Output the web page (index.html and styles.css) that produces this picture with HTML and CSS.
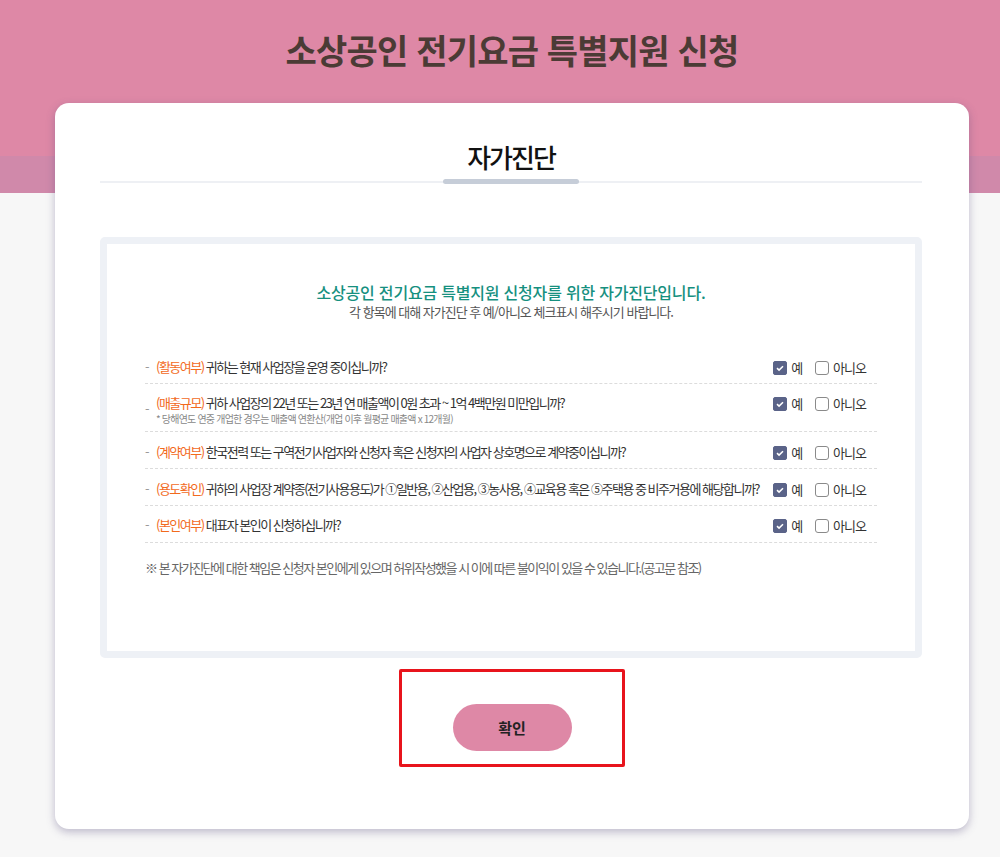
FILE: index.html
```html
<!DOCTYPE html>
<html lang="ko">
<head>
    <meta charset="UTF-8">
    <meta name="viewport" content="width=device-width, initial-scale=1.0">
    <title>소상공인 전기요금 특별지원 신청</title>
    <link rel="stylesheet" href="styles.css">
</head>
<body>
    <div class="wrap">
        <div class="top">
            <h1 class="main-title">소상공인 전기요금 특별지원 신청</h1>
        </div>

        <div class="card">
            <h2 class="card-title">자가진단</h2>
            <div class="tab-line"><span class="tab-bar"></span></div>

            <div class="check-box">
                <p class="intro">소상공인 전기요금 특별지원 신청자를 위한 자가진단입니다.</p>
                <p class="intro-sub">각 항목에 대해 자가진단 후 예/아니오 체크표시 해주시기 바랍니다.</p>

                <ul class="q-list">
                    <li class="q-row">
                        <div class="q-text"><span class="dash">-</span><span class="tag">(활동여부)</span> 귀하는 현재 사업장을 운영 중이십니까?</div>
                        <div class="answers">
                            <span class="opt"><span class="box on"><svg viewBox="0 0 14 14"><path d="M3.5 7.2l2.4 2.3 4.6-4.6" /></svg></span>예</span>
                            <span class="opt"><span class="box"></span>아니오</span>
                        </div>
                    </li>
                    <li class="q-row">
                        <div class="q-text"><span class="dash low">-</span><span class="tag">(매출규모)</span> 귀하 사업장의 22년 또는 23년 연 매출액이 0원 초과 ~ 1억 4백만원 미만입니까?
                            <div class="q-note">* 당해연도 연중 개업한 경우는 매출액 연환산(개업 이후 월평균 매출액 x 12개월)</div>
                        </div>
                        <div class="answers">
                            <span class="opt"><span class="box on"><svg viewBox="0 0 14 14"><path d="M3.5 7.2l2.4 2.3 4.6-4.6" /></svg></span>예</span>
                            <span class="opt"><span class="box"></span>아니오</span>
                        </div>
                    </li>
                    <li class="q-row">
                        <div class="q-text"><span class="dash">-</span><span class="tag">(계약여부)</span> 한국전력 또는 구역전기사업자와 신청자 혹은 신청자의 사업자 상호명으로 계약중이십니까?</div>
                        <div class="answers">
                            <span class="opt"><span class="box on"><svg viewBox="0 0 14 14"><path d="M3.5 7.2l2.4 2.3 4.6-4.6" /></svg></span>예</span>
                            <span class="opt"><span class="box"></span>아니오</span>
                        </div>
                    </li>
                    <li class="q-row">
                        <div class="q-text"><span class="dash">-</span><span class="tag">(용도확인)</span> 귀하의 사업장 계약종(전기사용용도)가 <span class="num">①</span>일반용, <span class="num">②</span>산업용, <span class="num">③</span>농사용, <span class="num">④</span>교육용 혹은 <span class="num">⑤</span>주택용 중 비주거용에 해당합니까?</div>
                        <div class="answers">
                            <span class="opt"><span class="box on"><svg viewBox="0 0 14 14"><path d="M3.5 7.2l2.4 2.3 4.6-4.6" /></svg></span>예</span>
                            <span class="opt"><span class="box"></span>아니오</span>
                        </div>
                    </li>
                    <li class="q-row">
                        <div class="q-text"><span class="dash">-</span><span class="tag">(본인여부)</span> 대표자 본인이 신청하십니까?</div>
                        <div class="answers">
                            <span class="opt"><span class="box on"><svg viewBox="0 0 14 14"><path d="M3.5 7.2l2.4 2.3 4.6-4.6" /></svg></span>예</span>
                            <span class="opt"><span class="box"></span>아니오</span>
                        </div>
                    </li>
                </ul>

                <p class="notice">※ 본 자가진단에 대한 책임은 신청자 본인에게 있으며 허위작성했을 시 이에 따른 불이익이 있을 수 있습니다.(공고문 참조)</p>
            </div>

            <div class="btn-area">
                <div class="btn-frame">
                    <button type="button" class="btn-ok">확인</button>
                </div>
            </div>
        </div>
    </div>
</body>
</html>
```

FILE: styles.css
```css
html, body {
    margin: 0;
    padding: 0;
}
body {
    font-family: "Noto Sans CJK KR", "Noto Sans", sans-serif;
    background: #f7f7f7;
    color: #333;
    overflow-x: hidden;
    min-height: 857px;
}
.wrap {
    width: 1024px;
    padding-bottom: 28px;
}
.top {
    height: 193px;
    background: linear-gradient(to bottom, #de88a6 0, #de88a6 156px, #d089aa 156px, #d089aa 193px);
}
.main-title {
    margin: 0;
    padding-top: 28px;
    font-size: 34px;
    line-height: 44px;
    font-weight: 700;
    letter-spacing: -0.8px;
    text-align: center;
    color: #4b3b35;
}
.card {
    width: 914px;
    box-sizing: border-box;
    margin: -90px auto 0 auto;
    padding: 36px 47px 62px 45px;
    background: #fff;
    border-radius: 14px;
    box-shadow: 0px 3px 8px rgba(80, 70, 120, 0.35);
}
.card-title {
    margin: 0;
    font-size: 26px;
    line-height: 36px;
    font-weight: 500;
    letter-spacing: -2px;
    text-align: center;
    color: #111;
}
.tab-line {
    margin-top: 4px;
    height: 5px;
    display: flex;
    justify-content: center;
    background: linear-gradient(#eef0f4, #eef0f4) center / 100% 2px no-repeat;
}
.tab-bar {
    width: 136px;
    height: 5px;
    border-radius: 3px;
    background: #c6cdd8;
}
.check-box {
    margin-top: 53px;
    border: 7px solid #eef1f6;
    border-radius: 5px;
    padding: 37px 38px 74px 38px;
}
.intro {
    margin: 0;
    font-size: 16px;
    line-height: 22px;
    font-weight: 500;
    letter-spacing: -0.2px;
    text-align: center;
    color: #16907f;
}
.intro-sub {
    margin: 0;
    font-size: 13px;
    line-height: 18px;
    letter-spacing: -1px;
    text-align: center;
    color: #555;
}
.q-list {
    list-style: none;
    margin: 26px 0 0 0;
    padding: 0;
}
.q-row {
    display: flex;
    justify-content: space-between;
    align-items: flex-start;
    padding: 12px 0 7px 0;
    border-bottom: 1px dashed #dcdcdc;
    font-size: 13px;
    line-height: 16px;
    letter-spacing: -1.5px;
}
.q-row:nth-child(2) {
    padding-top: 11px;
    padding-bottom: 6px;
}
.q-row:last-child {
    padding-top: 11px;
    padding-bottom: 8px;
}
.q-text {
    color: #333;
}
.dash {
    display: inline-block;
    width: 11px;
    color: #999;
}
.dash.low {
    position: relative;
    top: 6px;
}
.tag {
    color: #f26a1d;
}
.num {
    font-size: 12px;
    letter-spacing: -1.5px;
}
.q-note {
    padding-left: 11px;
    margin-top: 1px;
    font-size: 10px;
    line-height: 13px;
    letter-spacing: -0.8px;
    color: #888;
}
.answers {
    display: flex;
    gap: 13px;
    flex-shrink: 0;
    padding-top: 1px;
    margin-right: 11px;
    letter-spacing: -1px;
}
.opt {
    display: flex;
    align-items: center;
    gap: 4px;
    color: #333;
}
.box {
    width: 14px;
    height: 14px;
    box-sizing: border-box;
    border: 1px solid #8a8a8a;
    border-radius: 3px;
    background: #fff;
}
.box.on {
    border-color: #5a6388;
    background: #5a6388;
    border-radius: 2px;
}
.box svg {
    display: block;
    width: 12px;
    height: 12px;
    fill: none;
    stroke: #fff;
    stroke-width: 1.8;
}
.notice {
    margin: 16px 0 0 0;
    font-size: 13px;
    line-height: 18px;
    letter-spacing: -1.5px;
    color: #666;
}
.btn-area {
    display: flex;
    justify-content: center;
    margin-top: 11px;
    padding-left: 2px;
}
.btn-frame {
    width: 226px;
    height: 98px;
    box-sizing: border-box;
    border: 3px solid #e8141c;
    border-radius: 2px;
    padding-top: 32px;
    display: flex;
    justify-content: center;
}
.btn-ok {
    width: 119px;
    height: 47px;
    border: none;
    border-radius: 24px;
    background: #de88a6;
    font-family: "Noto Sans CJK KR", sans-serif;
    font-size: 15px;
    font-weight: 700;
    color: #222;
    cursor: pointer;
}
```
